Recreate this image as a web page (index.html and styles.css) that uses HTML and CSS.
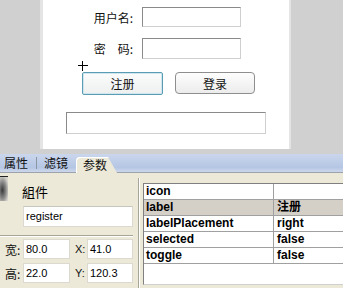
FILE: index.html
```html
<!DOCTYPE html>
<html>
<head>
<meta charset="utf-8">
<link rel="stylesheet" href="styles.css">
</head>
<body>
<div class="top">
  <div class="stage">
    <div class="row r1"><span class="lbl">用户名:</span><span class="field"></span></div>
    <div class="row r2"><span class="lbl">密　码:</span><span class="field"></span></div>
    <div class="btns"><span class="btn b1">注册</span><span class="btn b2">登录</span></div>
    <div class="msg"></div>
    <div class="cross"><span class="ch"></span><span class="cv"></span></div>
  </div>
</div>
<div class="tabs">
  <span class="tab">属性</span><span class="tsep"></span><span class="tab">滤镜</span><span class="tab active">参数</span>
</div>
<div class="panel">
  <div class="left">
    <div class="head"><div class="thumb"></div><div class="name">組件</div></div>
    <div class="inst">register</div>
    <div class="sep"></div>
    <div class="dims">
      <span class="dl">宽:</span><span class="dv">80.0</span><span class="dl dx">X:</span><span class="dv">41.0</span>
      <span class="dl">高:</span><span class="dv">22.0</span><span class="dl dx">Y:</span><span class="dv">120.3</span>
    </div>
  </div>
  <div class="vdiv"></div>
  <div class="right">
    <div class="grid">
      <div class="tr"><span class="c1">icon</span><span class="c2"></span></div>
      <div class="tr sel"><span class="c1">label</span><span class="c2">注册</span></div>
      <div class="tr"><span class="c1">labelPlacement</span><span class="c2">right</span></div>
      <div class="tr"><span class="c1">selected</span><span class="c2">false</span></div>
      <div class="tr"><span class="c1">toggle</span><span class="c2">false</span></div>
    </div>
  </div>
</div>
</body>
</html>
```
FILE: styles.css
```css
html, body { margin: 0; padding: 0; }
body {
  width: 343px; height: 288px; overflow: hidden;
  font-family: "Liberation Sans", "Noto Sans CJK SC", sans-serif;
  color: #000;
  background: #ece9d8;
}
.top { height: 154px; background: #d0d0d0; overflow: hidden; }
.stage {
  position: relative;
  margin-left: 40px; width: 251px; height: 149px;
  background: #fff;
  border-left: 3px solid #e4e4e4; border-right: 2px solid #e4e4e4;
  padding-top: 7px; box-sizing: border-box;
}
.row { display: flex; align-items: center; height: 20px; }
.r2 { margin-top: 11px; height: 21px; }
.lbl {
  width: 90px; text-align: right; margin-right: 9px;
  font-family: "Noto Sans CJK SC", sans-serif; font-size: 12px; color: #111;
}
.field, .msg {
  display: block; box-sizing: border-box;
  border: 1px solid; border-color: #8a8a8a #cfcfcf #cfcfcf #8a8a8a;
  background: #fff;
}
.field { width: 99px; height: 100%; }
.btns { display: flex; margin-top: 13px; margin-left: 39px; gap: 12px; }
.btn {
  display: flex; align-items: center; justify-content: center;
  box-sizing: border-box; height: 23px;
  font-family: "Noto Sans CJK SC", sans-serif; font-size: 12px; color: #111;
}
.b1 {
  width: 81px; border: 1px solid #5a9cb4; border-radius: 2px;
  box-shadow: inset 0 0 0 1px #cfe6ee;
  background: linear-gradient(#fbfbfb, #eef0f0);
}
.b2 {
  width: 80px; height: 22px; border: 1px solid #8e8e8e; border-radius: 4px;
  background: linear-gradient(#fdfdfd, #ececec);
}
.msg { margin-top: 17px; margin-left: 23px; width: 200px; height: 22px; }
.cross { position: absolute; left: 35px; top: 61px; width: 10px; height: 10px; }
.ch { position: absolute; left: 0; top: 4px; width: 10px; height: 1px; background: #000; }
.cv { position: absolute; left: 4px; top: 0; width: 1px; height: 10px; background: #000; }

.tabs {
  height: 18px; display: flex; align-items: flex-end;
  background: linear-gradient(#cad6ec, #b5c6e4 75%, #cdd7ea);
  border-bottom: 1px solid #9ca3ad;
  padding-left: 4px;
  font-family: "Noto Sans CJK SC", sans-serif; font-size: 12px; color: #111;
}
.tab { height: 18px; line-height: 18px; }
.tsep { width: 1px; height: 12px; background: #8c95a4; margin: 0 7px 3px 8px; align-self: flex-end; }
.active {
  margin-left: 8px; height: 16px; line-height: 16px; margin-bottom: -1px;
  padding: 0 10px 0 7px;
  background: #ece9d8;
  border-top-left-radius: 4px;
  clip-path: polygon(0 0, 78% 0, 100% 100%, 0 100%);
  box-shadow: inset 1px 1px 0 #fff;
}
.panel { display: flex; height: 115px; }
.left { width: 138px; padding-top: 3px; box-sizing: border-box; }
.head { display: flex; height: 30px; }
.thumb {
  width: 8px; height: 24px;
  border-top: 1px solid #222;
  background: radial-gradient(ellipse at 30% 55%, #3a3a3a 0, #8a8a8a 45%, #d6d4cc 80%);
}
.name { margin-left: 14px; padding-top: 8px; font-family: "Noto Sans CJK SC", sans-serif; font-size: 13px; line-height: 16px; }
.inst {
  margin-left: 23px; width: 110px; height: 21px; box-sizing: border-box;
  background: #fff; border: 1px solid #dcdad0; border-top-color: #c8c6bc;
  font-size: 11px; line-height: 19px; padding-left: 2px;
}
.sep { margin-top: 8px; width: 133px; height: 1px; background: #a8a598; border-bottom: 1px solid #fff; }
.dims {
  margin-top: 2px;
  display: grid; grid-template-columns: 23px 47px 17px 46px;
  grid-auto-rows: 20px; row-gap: 4px; align-items: center;
}
.dl { font-family: "Noto Sans CJK SC", sans-serif; font-size: 12px; padding-left: 5px; color: #111; }
.dx { padding-left: 5px; font-family: "Liberation Sans", sans-serif; font-size: 11px; }
.dv {
  height: 20px; box-sizing: border-box; background: #fff;
  border: 1px solid #dcdad0; font-size: 11px; line-height: 18px; padding-left: 2px;
}
.vdiv { width: 1px; height: 110px; margin-top: 5px; background: #a8a598; border-right: 1px solid #fff; }
.right { flex: 1; padding: 10px 0 0 3px; }
.grid {
  height: 102px; box-sizing: border-box; background: #fff;
  border: 1px solid #808080; border-right: none; border-bottom-color: #d0d0d0;
}
.tr { display: flex; height: 16px; border-bottom: 1px solid #a0a0a0; box-sizing: border-box; font-weight: bold; font-size: 12px; line-height: 15px; }
.sel { background: #d4d0c8; }
.c1 { width: 130px; padding-left: 2px; border-right: 1px solid #a0a0a0; box-sizing: border-box; }
.c2 { padding-left: 3px; font-family: "Liberation Sans", "Noto Sans CJK SC", sans-serif; }
```
